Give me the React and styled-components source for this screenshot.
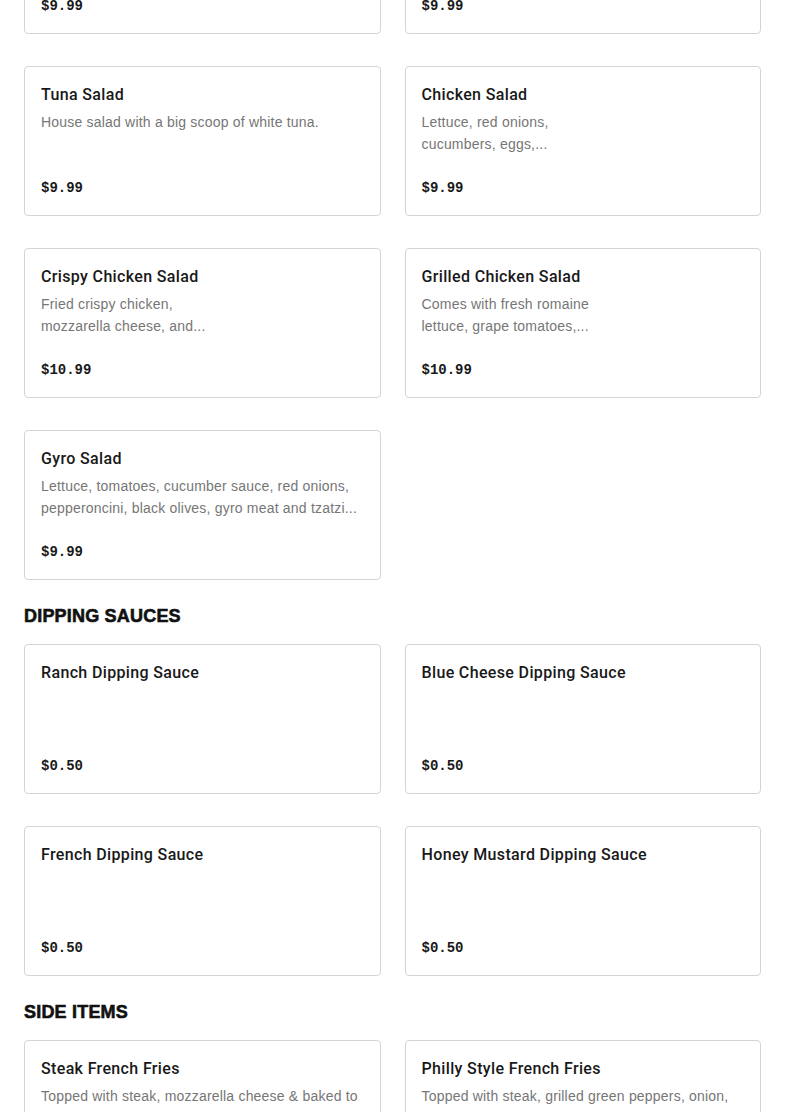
import React from 'react';
import styled, { createGlobalStyle } from 'styled-components';

const GlobalStyle = createGlobalStyle`
  html, body {
    margin: 0;
    padding: 0;
    background: #ffffff;
    overflow: hidden;
  }
  body {
    font-family: 'Liberation Sans', Arial, sans-serif;
  }
`

const sections = [
  {
    title: null,
    items: [
      { name: 'House Salad', desc: 'Lettuce, tomatoes, cucumbers, red onions.', price: '$9.99' },
      { name: 'Greek Salad', desc: 'Lettuce, tomatoes, feta cheese, olives.', price: '$9.99' },
      { name: 'Tuna Salad', desc: 'House salad with a big scoop of white tuna.', price: '$9.99' },
      { name: 'Chicken Salad', desc: 'Lettuce, red onions,\ncucumbers, eggs,...', price: '$9.99' },
      { name: 'Crispy Chicken Salad', desc: 'Fried crispy chicken,\nmozzarella cheese, and...', price: '$10.99' },
      { name: 'Grilled Chicken Salad', desc: 'Comes with fresh romaine\nlettuce, grape tomatoes,...', price: '$10.99' },
      { name: 'Gyro Salad', desc: 'Lettuce, tomatoes, cucumber sauce, red onions,\npepperoncini, black olives, gyro meat and tzatzi...', price: '$9.99' },
    ],
  },
  {
    title: 'Dipping Sauces',
    items: [
      { name: 'Ranch Dipping Sauce', price: '$0.50' },
      { name: 'Blue Cheese Dipping Sauce', price: '$0.50' },
      { name: 'French Dipping Sauce', price: '$0.50' },
      { name: 'Honey Mustard Dipping Sauce', price: '$0.50' },
    ],
  },
  {
    title: 'Side Items',
    items: [
      { name: 'Steak French Fries', desc: 'Topped with steak, mozzarella cheese & baked to\nperfection.', price: '$8.99' },
      { name: 'Philly Style French Fries', desc: 'Topped with steak, grilled green peppers, onion,\nmozzarella cheese...', price: '$8.99' },
    ],
  },
]

function App() {
  return (
    <Page>
      <GlobalStyle />
      {sections.map((section, i) => (
        <Section key={i} $first={i === 0}>
          {section.title && <SectionTitle>{section.title}</SectionTitle>}
          <CardGrid>
            {section.items.map((item) => (
              <Card key={item.name}>
                <ItemName>{item.name}</ItemName>
                {item.desc && <ItemDesc>{item.desc}</ItemDesc>}
                <Price>{item.price}</Price>
              </Card>
            ))}
          </CardGrid>
        </Section>
      ))}
    </Page>
  );
}

export const Page = styled.div`
  height: 1112px;
  overflow: hidden;
  padding: 0 24px;
  box-sizing: border-box;
`

export const Section = styled.section`
  margin-top: ${(p) => (p.$first ? '-116px' : '24px')};
`

export const SectionTitle = styled.h2`
  margin: 0 0 16px;
  font-family: 'Liberation Sans', Arial, sans-serif;
  font-size: 18px;
  line-height: 24px;
  font-weight: 700;
  text-transform: uppercase;
  color: #111111;
  -webkit-text-stroke: 0.6px #111111;
  letter-spacing: 0.2px;
`

export const CardGrid = styled.div`
  display: grid;
  grid-template-columns: 1fr 1fr;
  column-gap: 24px;
  row-gap: 32px;
`

export const Card = styled.div`
  display: flex;
  flex-direction: column;
  height: 150px;
  box-sizing: border-box;
  padding: 16px;
  border: 1px solid #d4d4d4;
  border-radius: 4px;
  background: #ffffff;
`

export const ItemName = styled.div`
  font-family: Roboto, 'Liberation Sans', sans-serif;
  font-size: 16px;
  line-height: 24px;
  font-weight: 500;
  letter-spacing: 0.35px;
  color: #191919;
`

export const ItemDesc = styled.div`
  margin-top: 4px;
  font-size: 14px;
  line-height: 22px;
  letter-spacing: 0.2px;
  color: #767676;
  white-space: pre-line;
`

export const Price = styled.div`
  margin-top: auto;
  font-family: 'Liberation Mono', 'Courier New', monospace;
  font-size: 14px;
  line-height: 22px;
  font-weight: 700;
  color: #191919;
`

export default App;
